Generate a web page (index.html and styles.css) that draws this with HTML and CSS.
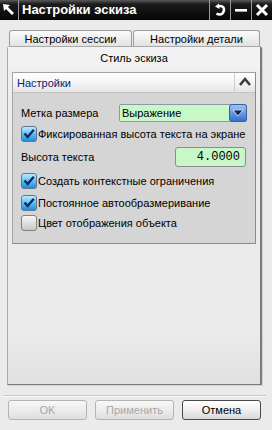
FILE: index.html
```html
<!DOCTYPE html>
<html lang="ru">
<head>
    <meta charset="UTF-8">
    <title>Настройки эскиза</title>
    <link rel="stylesheet" href="styles.css">
</head>
<body>
    <svg class="defs" width="0" height="0">
        <defs>
            <linearGradient id="cbOn" x1="0" y1="0" x2="0" y2="1">
                <stop offset="0" stop-color="#c4ecff"/>
                <stop offset="0.5" stop-color="#5cc0f4"/>
                <stop offset="1" stop-color="#1f86dc"/>
            </linearGradient>
            <linearGradient id="cbOff" x1="0" y1="0" x2="0" y2="1">
                <stop offset="0" stop-color="#f8f8f8"/>
                <stop offset="1" stop-color="#c6c6c6"/>
            </linearGradient>
            <linearGradient id="ddBtn" x1="0" y1="0" x2="0" y2="1">
                <stop offset="0" stop-color="#9cc6f4"/>
                <stop offset="1" stop-color="#2f6fd0"/>
            </linearGradient>
        </defs>
    </svg>

    <div class="dialog">
        <div class="titlebar">
            <div class="app-icon">
                <svg width="18" height="20" viewBox="0 0 18 20">
                    <polygon points="3,4 10,5 8,7 14,13 12,15 6,9 4,11" fill="#fff"/>
                </svg>
            </div>
            <div class="title">Настройки эскиза</div>
            <div class="tb-btn">
                <svg width="20" height="20" viewBox="0 0 20 20">
                    <path d="M8 6.5 Q11.5 5 13.5 7.5 Q15 10.5 12.5 13.5 Q9.5 15.5 6.5 13.5" fill="none" stroke="#fff" stroke-width="2.4"/>
                    <polygon points="5,6.5 9,3.5 9.5,9" fill="#fff"/>
                </svg>
            </div>
            <div class="tb-btn">
                <svg width="20" height="20" viewBox="0 0 20 20">
                    <rect x="4" y="9" width="12" height="2.6" fill="#fff"/>
                </svg>
            </div>
            <div class="tb-btn">
                <svg width="20" height="20" viewBox="0 0 20 20">
                    <path d="M5 5 L15 15 M15 5 L5 15" stroke="#fff" stroke-width="3"/>
                </svg>
            </div>
        </div>

        <div class="tab-row">
            <div class="tab tab-session">Настройки сессии</div>
            <div class="tab tab-part">Настройки детали</div>
        </div>

        <div class="sheet">
            <div class="sheet-tab">Стиль эскиза</div>
            <div class="sheet-body">
                <div class="group">
                    <div class="group-head">
                        <span class="group-title">Настройки</span>
                        <span class="collapse">
                            <svg width="20" height="18" viewBox="0 0 20 18">
                                <path d="M5 12 L10 6 L15 12" fill="none" stroke="#3c3c3c" stroke-width="2.6"/>
                            </svg>
                        </span>
                    </div>
                    <div class="group-body">
                        <div class="row row-dim">
                            <span class="label">Метка размера</span>
                            <div class="select">
                                <span class="select-text">Выражение</span>
                                <svg class="select-btn" width="18" height="18" viewBox="0 0 18 18">
                                    <rect x="0.5" y="0.5" width="17" height="17" rx="2.5" fill="url(#ddBtn)" stroke="#3a5f9c"/>
                                    <polygon points="4,6 14,6 9,12" fill="#15254f" stroke="#e8f0ff" stroke-width="0.8"/>
                                </svg>
                            </div>
                        </div>
                        <label class="row row-fixed">
                            <svg class="cb" width="16" height="16" viewBox="0 0 16 16">
                                <rect x="0.5" y="0.5" width="15" height="15" rx="2.5" fill="url(#cbOn)" stroke="#5b7896"/>
                                <path d="M3.5 7.5 L6.7 11 L12.8 3.8" fill="none" stroke="#102a5e" stroke-width="2.4"/>
                            </svg>
                            <span>Фиксированная высота текста на экране</span>
                        </label>
                        <div class="row row-height">
                            <span class="label">Высота текста</span>
                            <div class="number">4.0000</div>
                        </div>
                        <label class="row row-ctx">
                            <svg class="cb" width="16" height="16" viewBox="0 0 16 16">
                                <rect x="0.5" y="0.5" width="15" height="15" rx="2.5" fill="url(#cbOn)" stroke="#5b7896"/>
                                <path d="M3.5 7.5 L6.7 11 L12.8 3.8" fill="none" stroke="#102a5e" stroke-width="2.4"/>
                            </svg>
                            <span>Создать контекстные ограничения</span>
                        </label>
                        <label class="row row-auto">
                            <svg class="cb" width="16" height="16" viewBox="0 0 16 16">
                                <rect x="0.5" y="0.5" width="15" height="15" rx="2.5" fill="url(#cbOn)" stroke="#5b7896"/>
                                <path d="M3.5 7.5 L6.7 11 L12.8 3.8" fill="none" stroke="#102a5e" stroke-width="2.4"/>
                            </svg>
                            <span>Постоянное автообразмеривание</span>
                        </label>
                        <label class="row row-color">
                            <svg class="cb" width="16" height="16" viewBox="0 0 16 16">
                                <rect x="0.5" y="0.5" width="15" height="15" rx="2.5" fill="url(#cbOff)" stroke="#808080"/>
                            </svg>
                            <span>Цвет отображения объекта</span>
                        </label>
                    </div>
                </div>
            </div>
        </div>

        <div class="separator"></div>

        <div class="buttons">
            <button class="btn" disabled>OK</button>
            <button class="btn" disabled>Применить</button>
            <button class="btn btn-default">Отмена</button>
        </div>
    </div>
</body>
</html>
```

FILE: styles.css
```css
body {
    margin: 0;
    background-color: #ebebeb;
    font-family: "Liberation Sans", Arial, sans-serif;
    font-size: 11px;
    color: #000;
}
.defs {
    display: block;
    width: 0;
    height: 0;
}
.dialog {
    width: 272px;
    height: 430px;
    overflow: hidden;
}
.titlebar {
    display: flex;
    height: 20px;
    background: linear-gradient(#5a5a5a 0, #1c1c1c 20%, #050505 100%);
}
.app-icon {
    width: 18px;
    border-right: 1px solid #9a9a9a;
}
.title {
    flex: 1;
    padding-left: 3px;
    color: #fff;
    font-weight: bold;
    font-size: 13px;
    line-height: 20px;
    white-space: nowrap;
}
.tb-btn {
    width: 20px;
    border-left: 1px solid #9a9a9a;
}
.tab-row {
    display: flex;
    padding: 10px 0 0 9px;
}
.tab {
    height: 15px;
    line-height: 17px;
    text-align: center;
    border: 1px solid #9c9c9c;
    border-bottom: none;
    border-radius: 3px 3px 0 0;
    background: linear-gradient(#fbfbfb, #e2e2e2);
}
.tab-session {
    width: 121px;
}
.tab-part {
    width: 125px;
    margin-left: 1px;
}
.sheet {
    margin-left: 7px;
    width: 252px;
    height: 337px;
    border: 1px solid #a8a8a8;
    border-right: 2px solid #7c7c7c;
    border-bottom: 1px solid #7c7c7c;
    border-radius: 3px 3px 0 0;
    box-shadow: 1px 1px 0 #d2d2d2;
    background: linear-gradient(#f0f0f0 0, #ebebeb 30%, #ebebeb 85%, #e0e0e0 100%);
}
.sheet-tab {
    height: 22px;
    line-height: 22px;
    text-align: center;
    background: #f2f2f2;
}
.sheet-body {
    padding: 3px 4px 0 4px;
}
.group {
    border: 1px solid #a4a4a4;
    border-right-color: #8a8a8a;
    border-bottom-color: #8a8a8a;
}
.group-head {
    display: flex;
    align-items: center;
    height: 19px;
    border-bottom: 1px solid #c4c4c4;
    background: linear-gradient(#ffffff, #f2f2f2 60%, #e4e4e4);
}
.group-title {
    flex: 1;
    padding-left: 4px;
    color: #0b2470;
}
.collapse {
    width: 20px;
    height: 19px;
    border-left: 1px solid #d0d0d0;
}
.group-body {
    background: #d5d5d5;
    padding: 10px 0 10px 8px;
}
.row {
    display: flex;
    align-items: center;
    white-space: nowrap;
}
.row .cb {
    margin-right: 1px;
    flex: none;
}
.row-dim {
    height: 20px;
}
.row-fixed {
    height: 22px;
}
.row-height {
    height: 24px;
}
.row-ctx {
    height: 24px;
}
.row-auto {
    height: 20px;
}
.row-color {
    height: 20px;
}
.label {
    width: 98px;
}
.select {
    display: flex;
    align-items: center;
    width: 126px;
    height: 16px;
    border: 1px solid #8c9aa8;
    border-radius: 2px;
    background: #c8f8c8;
}
.select-text {
    flex: 1;
    padding-left: 2px;
}
.select-btn {
    margin-right: -1px;
}
.number {
    margin-left: 56px;
    width: 64px;
    height: 18px;
    line-height: 18px;
    padding-right: 5px;
    text-align: right;
    font-family: "Liberation Mono", "Courier New", monospace;
    font-size: 12px;
    border: 1px solid #8c8c8c;
    border-radius: 3px;
    background: #c8f8c8;
}
.separator {
    margin: 10px 6px 0 4px;
    height: 1px;
    background: #c6c6c6;
    border-bottom: 1px solid #fafafa;
}
.buttons {
    display: flex;
    gap: 8px;
    padding: 3px 0 0 8px;
}
.btn {
    width: 79px;
    height: 20px;
    padding: 0;
    font-family: "Liberation Sans", Arial, sans-serif;
    font-size: 11px;
    color: #000;
    border: 1px solid #4a4a4a;
    border-radius: 3px;
    background: linear-gradient(#ffffff, #f0f0f0 50%, #d8d8d8);
}
.btn:disabled {
    color: #a8a8a8;
    border-color: #b4b4b4;
    background: linear-gradient(#f8f8f8, #ececec 50%, #dedede);
}
```
